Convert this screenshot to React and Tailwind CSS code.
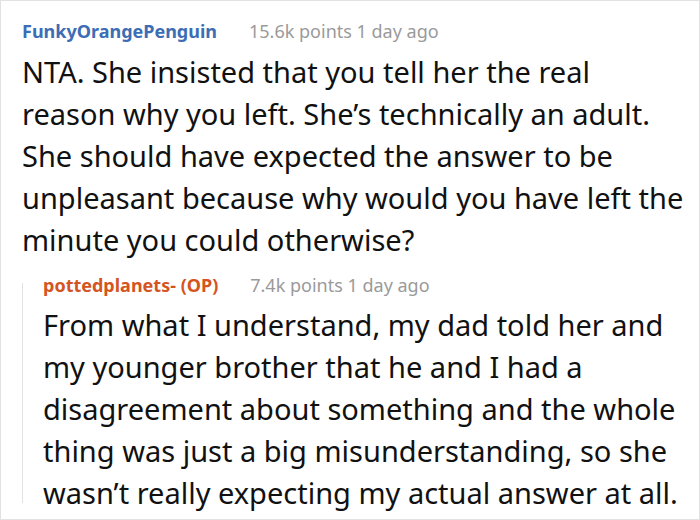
export default function App() {
  return (
    <div className="w-[700px] h-[520px] bg-white border border-[#e2e2e2] overflow-hidden font-['Noto_Sans',sans-serif] text-[#111]">
      <div className="pl-[21px] pt-[16px]">
        <div className="flex items-baseline gap-[32px] leading-[28px]">
          <span className="text-[18px] font-bold text-[#3c6db5]">FunkyOrangePenguin</span>
          <span className="text-[18px] text-[#9a9a9a]">15.6k points 1 day ago</span>
        </div>
        <p className="mt-[6px] text-[29px] leading-[42px] w-[662px]">
          NTA. She insisted that you tell her the real reason why you left. She’s technically an adult. She should have expected the answer to be unpleasant because why would you have left the minute you could otherwise?
        </p>
        <div className="mt-[10px] flex">
          <div className="w-[1px] bg-[#e2e2e2] mt-[12px] mb-[11px]" />
          <div className="pl-[20px]">
            <div className="flex items-baseline gap-[32px] leading-[28px]">
              <span className="text-[18px] font-bold text-[#d4551f]">pottedplanets- (OP)</span>
              <span className="text-[18px] text-[#9a9a9a]">7.4k points 1 day ago</span>
            </div>
            <p className="mt-[5px] text-[29px] leading-[42px] w-[640px]">
              From what I understand, my dad told her and my younger brother that he and I had a disagreement about something and the whole thing was just a big misunderstanding, so she wasn’t really expecting my actual answer at all.
            </p>
          </div>
        </div>
      </div>
    </div>
  );
}
